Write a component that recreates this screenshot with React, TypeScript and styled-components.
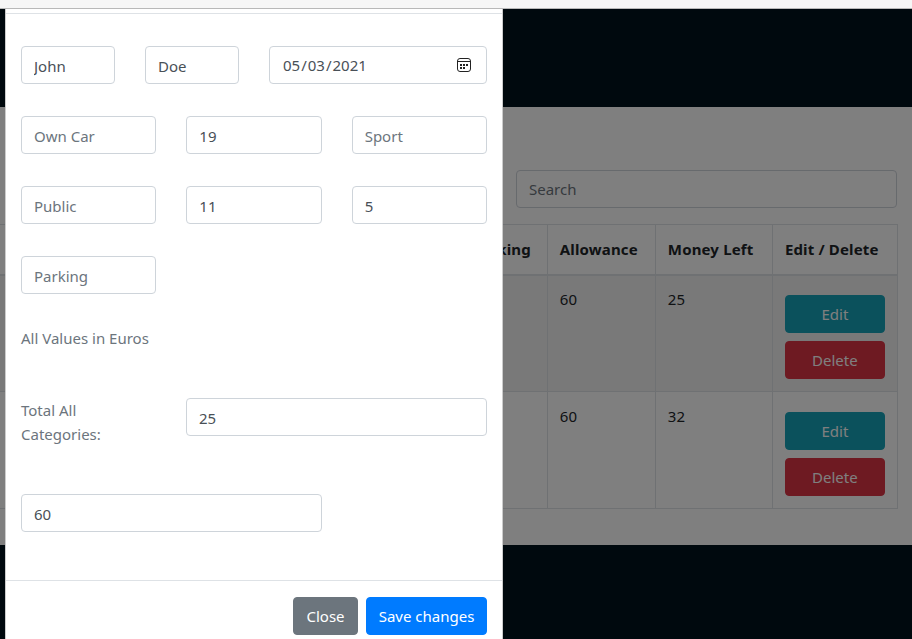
import React from "react";
import styled, { createGlobalStyle } from "styled-components";

const Global = createGlobalStyle`
  html, body { margin: 0; padding: 0; height: 639px; overflow: hidden; background: #00121c; }
  * { box-sizing: border-box; }
  body, input, button, table { font-family: "Noto Sans", "Open Sans", "Liberation Sans", sans-serif; font-size: 15px; }
`;

const Page = styled.div`
  position: relative;
  width: 912px;
  height: 639px;
  overflow: hidden;
  display: flex;
  flex-direction: column;
`;
const TopStrip = styled.div`
  position: relative;
  z-index: 3;
  flex: none;
  height: 9px;
  background: #f6f6f6;
  border-bottom: 1px solid #b8b8b8;
`;
const Band = styled.div`
  flex: none;
  background: #00121c;
  height: ${(p: { $h: number }) => p.$h}px;
`;
const Content = styled.section`
  flex: none;
  height: 438px;
  background: #fff;
  padding-top: 63px;
  display: flex;
  flex-direction: column;
  align-items: flex-end;
`;
const Field = styled.input`
  display: block;
  width: 100%;
  height: 38px;
  padding: 7px 12px 5px;
  border: 1px solid #ced4da;
  border-radius: 4px;
  background: #fff;
  color: #495057;
  line-height: 24px;
  outline: none;
  &::placeholder { color: #6c757d; opacity: 1; }
  &[type="date"] { padding: 6px 12px; }
  &::-webkit-calendar-picker-indicator { opacity: 0; }
`;
const SearchField = styled(Field)`
  padding: 6px 12px;
`;
const SearchBox = styled.div`
  width: 381px;
  margin: 0 15px 16px 0;
`;
const DateWrap = styled.div`
  position: relative;
`;
const CalendarIcon = styled.svg`
  position: absolute;
  top: 12px;
  right: 16px;
  width: 14px;
  height: 14px;
  pointer-events: none;
`;
const Table = styled.table`
  align-self: flex-start;
  width: 898px;
  table-layout: fixed;
  border-collapse: collapse;
  color: #212529;
`;
const Th = styled.th`
  height: 50px;
  padding: 12px;
  text-align: left;
  font-weight: 700;
  letter-spacing: 0.15px;
  white-space: nowrap;
  border: 1px solid #dee2e6;
  border-bottom-width: 2px;
  vertical-align: middle;
  &:first-child { border-left: 0; }
`;
const Td = styled.td`
  height: 117px;
  padding: 13px 12px 11px;
  border: 1px solid #dee2e6;
  vertical-align: top;
  &:first-child { border-left: 0; }
  tr + tr > & { padding-top: 14px; padding-bottom: 10px; }
`;
const Row = styled.tr<{ $striped?: boolean }>`
  background: ${(p) => (p.$striped ? "rgba(0,0,0,.05)" : "transparent")};
`;
const ActionStack = styled.div`
  display: flex;
  flex-direction: column;
  gap: 8px;
  margin-top: 6px;
`;
const Btn = styled.button<{ $bg: string; $w: number }>`
  width: ${(p) => p.$w}px;
  height: 38px;
  border: 1px solid ${(p) => p.$bg};
  border-radius: 4px;
  background: ${(p) => p.$bg};
  color: #fff;
  padding: 0;
  line-height: 24px;
`;
const Backdrop = styled.div`
  position: absolute;
  inset: 0;
  z-index: 1;
  background: rgba(0, 0, 0, 0.5);
`;
const Modal = styled.div`
  position: absolute;
  z-index: 2;
  top: 9px;
  left: 5px;
  width: 498px;
  background: #fff;
  border-right: 1px solid rgba(0, 0, 0, 0.2);
  border-left: 1px solid rgba(0, 0, 0, 0.2);
`;
const ModalHeader = styled.div`
  height: 5px;
  border-bottom: 1px solid #dee2e6;
`;
const ModalBody = styled.div`
  height: 566px;
  padding: 32px 15px 0;
`;
const FormRow = styled.div<{ $cols: string; $mb?: number }>`
  display: grid;
  grid-template-columns: ${(p) => p.$cols};
  column-gap: 30px;
  margin-bottom: ${(p) => p.$mb ?? 32}px;
`;
const Muted = styled.div`
  color: #6c757d;
  line-height: 24px;
`;
const ModalFooter = styled.div`
  display: flex;
  justify-content: flex-end;
  gap: 8px;
  padding: 16px 15px;
  border-top: 1px solid #dee2e6;
`;

const val = (v: string) => <Field readOnly value={v} />;
const ph = (v: string) => <Field readOnly placeholder={v} />;
const THIRDS = "1fr 1fr 1fr";

export default function App() {
  return (
    <Page>
      <Global />
      <TopStrip />
      <Band $h={98} />
      <Content>
        <SearchBox>
          <SearchField readOnly placeholder="Search" />
        </SearchBox>
        <Table>
          <colgroup>
            <col style={{ width: 459 }} />
            <col style={{ width: 88 }} />
            <col style={{ width: 108 }} />
            <col style={{ width: 117 }} />
            <col style={{ width: 125 }} />
          </colgroup>
          <thead>
            <tr>
              <Th />
              <Th>Parking</Th>
              <Th>Allowance</Th>
              <Th>Money Left</Th>
              <Th>Edit / Delete</Th>
            </tr>
          </thead>
          <tbody>
            {[
              { left: "25", striped: true },
              { left: "32", striped: false },
            ].map((r) => (
              <Row key={r.left} $striped={r.striped}>
                <Td />
                <Td />
                <Td>60</Td>
                <Td>{r.left}</Td>
                <Td>
                  <ActionStack>
                    <Btn $w={100} $bg="#17a2b8">Edit</Btn>
                    <Btn $w={100} $bg="#dc3545">Delete</Btn>
                  </ActionStack>
                </Td>
              </Row>
            ))}
          </tbody>
        </Table>
      </Content>
      <Band $h={94} />
      <Backdrop />
      <Modal>
        <ModalHeader />
        <ModalBody>
          <FormRow $cols="94px 94px 1fr">
            {val("John")}
            {val("Doe")}
            <DateWrap>
              <Field type="date" defaultValue="2021-05-03" />
              <CalendarIcon viewBox="0 0 14 14">
                <rect x="0.5" y="0.5" width="13" height="13" rx="2.5" fill="none" stroke="#222" />
                <path d="M1 3.5H13" stroke="#222" />
                <path d="M3 6h2v2H3zM6 6h2v2H6zM9 6h2v2H9zM3 9h2v2H3zM6 9h2v2H6z" fill="#222" />
              </CalendarIcon>
            </DateWrap>
          </FormRow>
          <FormRow $cols={THIRDS}>
            {ph("Own Car")}
            {val("19")}
            {ph("Sport")}
          </FormRow>
          <FormRow $cols={THIRDS}>
            {ph("Public")}
            {val("11")}
            {val("5")}
          </FormRow>
          <FormRow $cols={THIRDS}>{ph("Parking")}</FormRow>
          <FormRow $cols="1fr" $mb={48}>
            <Muted>All Values in Euros</Muted>
          </FormRow>
          <FormRow $cols="135px 1fr" $mb={48}>
            <Muted>
              Total All
              <br />
              Categories:
            </Muted>
            {val("25")}
          </FormRow>
          <FormRow $cols="301px 1fr">{val("60")}</FormRow>
        </ModalBody>
        <ModalFooter>
          <Btn $w={65} $bg="#6c757d">Close</Btn>
          <Btn $w={121} $bg="#007bff">Save changes</Btn>
        </ModalFooter>
      </Modal>
    </Page>
  );
}
